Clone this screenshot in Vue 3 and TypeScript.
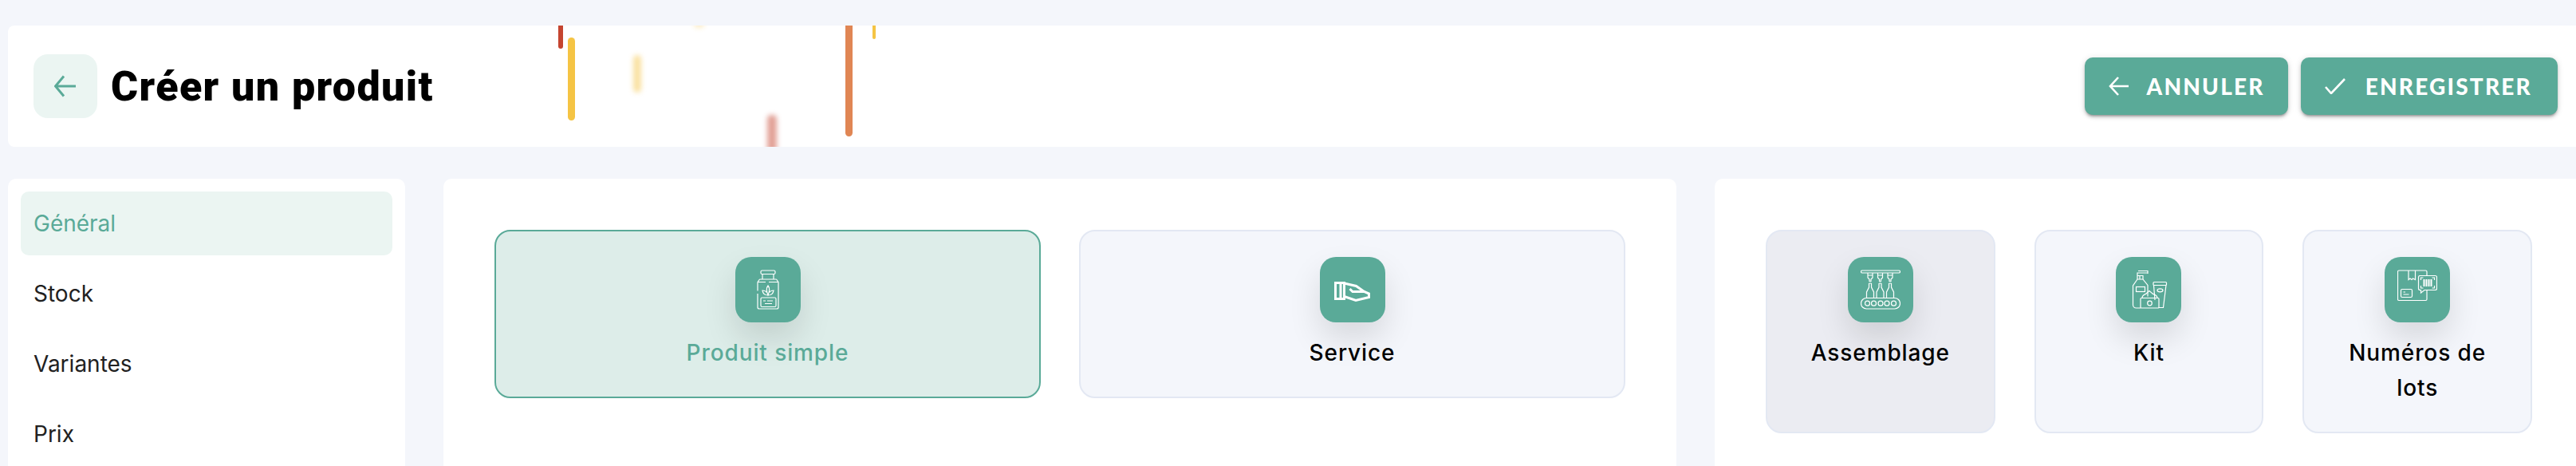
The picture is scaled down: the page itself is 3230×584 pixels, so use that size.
<script setup lang="ts">
interface Choice {
  id: string;
  label: string;
  active?: boolean;
  hovered?: boolean;
}

const menu: string[] = ['Général', 'Stock', 'Variantes', 'Prix'];

const types: Choice[] = [
  { id: 'bottle', label: 'Produit simple', active: true },
  { id: 'hand', label: 'Service' }
];

const options: Choice[] = [
  { id: 'line', label: 'Assemblage', hovered: true },
  { id: 'kit', label: 'Kit' },
  { id: 'lot', label: 'Numéros de lots' }
];

const confetti: string[] = ['red', 'yellow', 'pale', 'faint', 'pink', 'orange', 'tiny'];
</script>

<template>
  <div class="page">
    <header class="top">
      <span v-for="c in confetti" :key="c" class="bit" :class="c"></span>
      <div class="heading">
        <button class="back" type="button" aria-label="Retour">
          <svg width="28" height="28" viewBox="0 0 28 28" class="line-icon">
            <path d="M27 14H2M12 1.500 1.500 14 12 26.500" stroke-width="3" />
          </svg>
        </button>
        <h1>Créer un produit</h1>
      </div>
      <div class="actions">
        <button class="btn" type="button">
          <svg width="26" height="24" viewBox="0 0 26 24" class="line-icon">
            <path d="M25 12H2M12 1 2 12l10 11" stroke-width="2.600" />
          </svg>
          ANNULER
        </button>
        <button class="btn save" type="button">
          <svg width="26" height="20" viewBox="0 0 26 20" class="line-icon">
            <path d="M1 11l7 8L25 1" stroke-width="2.600" />
          </svg>
          ENREGISTRER
        </button>
      </div>
    </header>

    <div class="content">
      <nav class="panel menu">
        <a v-for="(item, i) in menu" :key="item" class="menu-item" :class="{ on: i === 0 }">{{ item }}</a>
      </nav>

      <section class="panel types">
        <div v-for="t in types" :key="t.id" class="card" :class="{ active: t.active }">
          <div class="tile">
            <svg v-if="t.id === 'bottle'" width="50" height="50" viewBox="0 0 50 50" class="line-icon thin">
              <rect x="16" y="1" width="18" height="4.500" rx="1.500" />
              <path d="M18 5.500V12M32 5.500V12M14.500 12h21M12 15.500l2.500-3.500M38 15.500 35.500 12M12 15.500h10M26 15.500h12M38 15.500V47a2 2 0 0 1-2 2H14a2 2 0 0 1-2-2V30M12 26.500V15.500" />
              <path d="M25 20c-2.500 3-2.500 6 0 12 2.500-6 2.500-9 0-12ZM25 32c-3.500 0-6.500-2-7-6 2.500 0 4.500 1 5.500 2.500M25 32c3.500 0 6.500-2 7-6-2.500 0-4.500 1-5.500 2.500" />
              <rect x="16" y="35" width="19" height="11.500" rx="1.500" />
              <path d="M19 39h3M24 39h7M21 42.500h9" />
            </svg>
            <svg v-else width="50" height="50" viewBox="0 0 50 50" class="line-icon hand">
              <path d="M3.500 16.500H10V36.500H3.500ZM10 16.500H14.500V36.500H10" />
              <path d="M14.500 17 29.500 20.500 39.500 27.500 45.500 30V34.500L29 38.500 14.500 33.500" />
              <path d="M21.500 24 25 27.500H39.500" />
            </svg>
          </div>
          <div class="label">{{ t.label }}</div>
        </div>
      </section>

      <section class="panel options">
        <div v-for="o in options" :key="o.id" class="card" :class="{ hovered: o.hovered }">
          <div class="tile">
            <svg v-if="o.id === 'line'" width="50" height="50" viewBox="0 0 50 50" class="line-icon thin">
              <rect x="0.500" y="1" width="49" height="3" rx="1.500" />
              <g v-for="x in [12, 24.500, 37]" :key="x">
                <path :d="`M${x - 3} 4v6l2 2v2.500h2V12l2-2V4M${x - 3} 7h6`" />
                <path :d="`M${x - 1.500} 17v5l-3 6v8M${x + 1.500} 17v5l3 6v8M${x - 1.500} 17h3`" />
              </g>
              <rect x="0.500" y="35.500" width="49" height="13.500" rx="6.750" />
              <circle v-for="x in [8.500, 16.500, 25, 33, 41.500]" :key="x" :cx="x" cy="42.200" r="3" />
            </svg>
            <svg v-else-if="o.id === 'kit'" width="50" height="50" viewBox="0 0 50 50" class="line-icon thin">
              <path d="M11 7.500V4H24V1.500H12M24 1.500V5M14 7.500V12H11V7.500H18V12H14" />
              <path d="M11 12 5.500 20V44a4 4 0 0 0 4 4H15M18 12l6 7.500v14" />
              <rect x="9.500" y="21.500" width="11" height="6" />
              <rect x="15" y="35.500" width="23" height="12.500" rx="1" />
              <path d="M17 35.500c0-5 5-4 6-6.500l3-2.500 3 2.500c1 2.500 7 1.500 7 6.500" />
              <circle cx="26.500" cy="42" r="2.800" />
              <rect x="31" y="15.500" width="16.500" height="4" rx="1" />
              <path d="M31.500 19.500 33 38M47 19.500 43.500 47.500H38" />
              <ellipse cx="39.500" cy="25.800" rx="3.500" ry="2" />
            </svg>
            <svg v-else width="50" height="50" viewBox="0 0 50 50" class="line-icon thin">
              <path d="M27 38.500H2a1.500 1.500 0 0 1-1.500-1.500V2.500A1.500 1.500 0 0 1 2 1h33.500a1.500 1.500 0 0 1 1.500 1.500V7M37 26v11a1.500 1.500 0 0 1-1.500 1.500H27" />
              <path d="M14 1v11.500l2-1.500 2 1.500 1.500-1.500 3 1.500V1" />
              <rect x="4.500" y="24.500" width="14" height="10" rx="1.500" />
              <path d="M7.500 28h2.500M7.500 31h7" />
              <path d="M28 7.500h19.500a2 2 0 0 1 2 2V23.500a2 2 0 0 1-2 2H34L29.500 29V25.500h-1a2 2 0 0 1-2-2V9.500a2 2 0 0 1 1.500-2Z" class="bubble" />
              <path d="M29.500 13v-3h3M43.500 10h3v3M46.500 20v3h-3M32.500 23h-3v-3" />
              <path d="M33.500 12v9M36.500 12v9M39.500 12v9M42.500 12v9" class="bars" />
            </svg>
          </div>
          <div class="label">{{ o.label }}</div>
        </div>
      </section>
    </div>
  </div>
</template>

<style scoped>
.page {
  width: 3229px;
  margin-left: 10px;
  padding-top: 32px;
  font-family: Inter, "Open Sans", sans-serif;
}

.top {
  position: relative;
  height: 152px;
  padding: 0 32px;
  box-sizing: border-box;
  background: #fff;
  border-radius: 8px;
  display: flex;
  align-items: center;
  justify-content: space-between;
  overflow: hidden;
}

.heading {
  display: flex;
  align-items: center;
  gap: 17px;
}

.back {
  width: 80px;
  height: 80px;
  border: none;
  border-radius: 18px;
  background: #ebf5f2;
  color: #5aaa98;
  display: flex;
  align-items: center;
  justify-content: center;
  padding: 0;
}

h1 {
  margin: 0;
  font-family: Roboto, sans-serif;
  font-size: 52px;
  font-weight: 900;
  letter-spacing: 1.400px;
  color: #000;
}

.line-icon {
  display: block;
  fill: none;
  stroke: currentColor;
}

.line-icon.thin {
  stroke-width: 1.200;
  color: #fff;
}

.line-icon.hand {
  stroke-width: 3;
  color: #fff;
}

.bubble {
  fill: #5aaa98;
}

.bars {
  stroke-width: 2;
}

.actions {
  display: flex;
  gap: 16px;
}

.btn {
  height: 72px;
  padding: 0 29px 0 30px;
  border: none;
  border-radius: 10px;
  background: #5aaa98;
  color: #fff;
  font-family: Lato, sans-serif;
  font-size: 28px;
  font-weight: 900;
  letter-spacing: 2.200px;
  display: flex;
  align-items: center;
  gap: 22px;
  box-shadow: 0 3px 3px -2px rgba(0, 0, 0, 0.3), 0 3px 4px rgba(0, 0, 0, 0.16), 0 1px 8px rgba(0, 0, 0, 0.12);
}

.btn.save {
  padding: 0 32px 0 30px;
  gap: 25px;
}

.bit {
  position: absolute;
  border-radius: 5px;
}

/* offsets are relative to the header, which starts at x 10, y 32 */
.red {
  left: 690px;
  top: -20px;
  width: 6px;
  height: 49px;
  background: #c5442f;
}

.yellow {
  left: 702px;
  top: 15px;
  width: 9px;
  height: 104px;
  background: #f5c444;
}

.pale {
  left: 784px;
  top: 37px;
  width: 10px;
  height: 47px;
  background: #f5c444;
  opacity: 0.5;
  filter: blur(3px);
}

.faint {
  left: 860px;
  top: -30px;
  width: 13px;
  height: 33px;
  background: #f5c444;
  opacity: 0.3;
  filter: blur(3px);
}

.pink {
  left: 952px;
  top: 112px;
  width: 12px;
  height: 60px;
  background: #c5442f;
  opacity: 0.5;
  filter: blur(3px);
}

.orange {
  left: 1050px;
  top: -20px;
  width: 9px;
  height: 159px;
  background: #e08654;
}

.tiny {
  left: 1084px;
  top: -20px;
  width: 4px;
  height: 37px;
  background: #f5c444;
}

.content {
  display: grid;
  grid-template-columns: 498px 1546px 1fr;
  gap: 48px;
  margin-top: 40px;
}

.panel {
  background: #fff;
  border-radius: 10px;
  min-height: 420px;
  box-sizing: border-box;
}

.menu {
  padding: 16px;
  display: flex;
  flex-direction: column;
  gap: 8px;
}

.menu-item {
  height: 80px;
  flex: none;
  padding: 0 16px;
  border-radius: 10px;
  display: flex;
  align-items: center;
  font-size: 28px;
  color: #212121;
}

.menu-item.on {
  background: #ebf5f2;
  color: #5aaa98;
}

.types {
  padding: 64px;
  display: grid;
  grid-template-columns: 1fr 1fr;
  gap: 48px;
  align-items: start;
}

.options {
  padding: 64px;
  display: grid;
  grid-template-columns: repeat(3, 1fr);
  gap: 49px;
  align-items: start;
}

.card {
  padding: 32px 32px 33px;
  border: 2px solid #e3e8f3;
  border-radius: 20px;
  background: #f4f6fb;
  text-align: center;
  box-sizing: border-box;
  font-size: 28px;
  font-weight: 500;
  letter-spacing: 0.900px;
  color: #000;
}

.options .card {
  height: 255px;
}

.card.active {
  background: #ddede9;
  border-color: #5aaa98;
  color: #5aaa98;
}

.card.hovered {
  background: #ebecf2;
}

.tile {
  width: 82px;
  height: 82px;
  margin: 0 auto 16px;
  border-radius: 20px;
  background: #5aaa98;
  display: flex;
  align-items: center;
  justify-content: center;
  box-shadow: 0 20px 40px rgba(0, 0, 0, 0.12);
}

.label {
  line-height: 44px;
}
</style>

<style>
html,
body {
  margin: 0;
  height: 100%;
  overflow: hidden;
  background: #f4f6fb;
}
</style>
